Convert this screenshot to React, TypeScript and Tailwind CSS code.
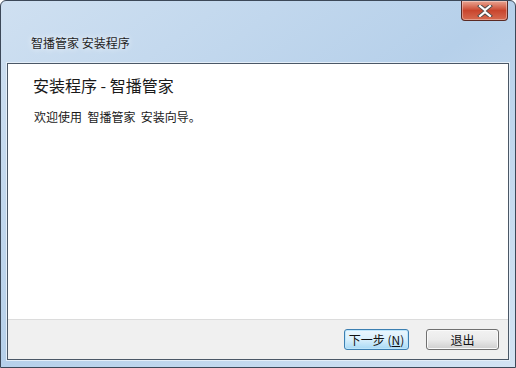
import React from "react";

const font = { fontFamily: '"Noto Sans CJK SC", "Liberation Sans", sans-serif' };

function CloseButton() {
  return (
    <div className="flex h-[20px] w-[47px] items-center justify-center rounded-b-[4px] border border-t-0 border-[#5a2a24] bg-gradient-to-b from-[#e8a492] via-[#c9452d] to-[#d66a50] shadow-[inset_0_0_0_1px_rgba(255,255,255,0.35)]">
      <svg width="16" height="12" viewBox="0 0 16 12">
        <path
          d="M3 1 L8 5 L13 1 M3 11 L8 7 L13 11"
          stroke="#4a4a4a"
          strokeWidth="4"
          fill="none"
          strokeLinecap="square"
        />
        <path
          d="M3 1 L8 5 L13 1 M3 11 L8 7 L13 11"
          stroke="#ffffff"
          strokeWidth="2.2"
          fill="none"
          strokeLinecap="square"
        />
      </svg>
    </div>
  );
}

export default function App() {
  return (
    <div className="h-[368px] w-[516px] bg-white" style={font}>
      <div className="flex h-full w-full flex-col rounded-t-[6px] border border-[#3c4858] bg-gradient-to-br from-[#cfe0f1] via-[#b6d0ea] to-[#d3e3f3]">
        {/* title bar */}
        <div className="flex h-[62px] flex-col">
          <div className="flex justify-end pr-[7px]">
            <CloseButton />
          </div>
          <div className="pl-[30px] pt-[15px] text-[12px] leading-[14px] text-[#1e1e1e] [text-shadow:0_0_6px_#ffffff]">
            智播管家 安装程序
          </div>
        </div>

        {/* client area */}
        <div className="mx-[6px] mb-[7px] flex flex-1 flex-col border border-[#4a5766] bg-white shadow-[0_0_0_1px_#e4eef8]">
          <div className="flex flex-1 flex-col pl-[25px] pt-[11px]">
            <div className="text-[16px] leading-[20px] text-[#1a1a1a]">安装程序 - 智播管家</div>
            <div className="mt-[14px] pl-[1px] text-[12px] leading-[16px] text-[#1a1a1a]">
              欢迎使用&nbsp;&nbsp;智播管家&nbsp;&nbsp;安装向导。
            </div>
          </div>
          <div className="flex h-[40px] items-center justify-end gap-[17px] border-t border-[#dcdcdc] bg-[#f0f0f0] pr-[9px]">
            <button className="flex h-[21px] w-[65px] items-center justify-center rounded-[3px] border border-[#3c7fb1] bg-gradient-to-b from-[#eaf6fd] via-[#d9f0fc] to-[#a7d9f5] text-[12px] leading-none text-[#111] shadow-[inset_0_0_0_1px_#bfe6fb]">
              下一步 (<span className="underline">N</span>)
            </button>
            <button className="flex h-[21px] w-[73px] items-center justify-center rounded-[3px] border border-[#707070] bg-gradient-to-b from-[#f2f2f2] via-[#ebebeb] to-[#cfcfcf] text-[12px] leading-none text-[#111] shadow-[inset_0_0_0_1px_#fafafa]">
              退出
            </button>
          </div>
        </div>
      </div>
    </div>
  );
}
